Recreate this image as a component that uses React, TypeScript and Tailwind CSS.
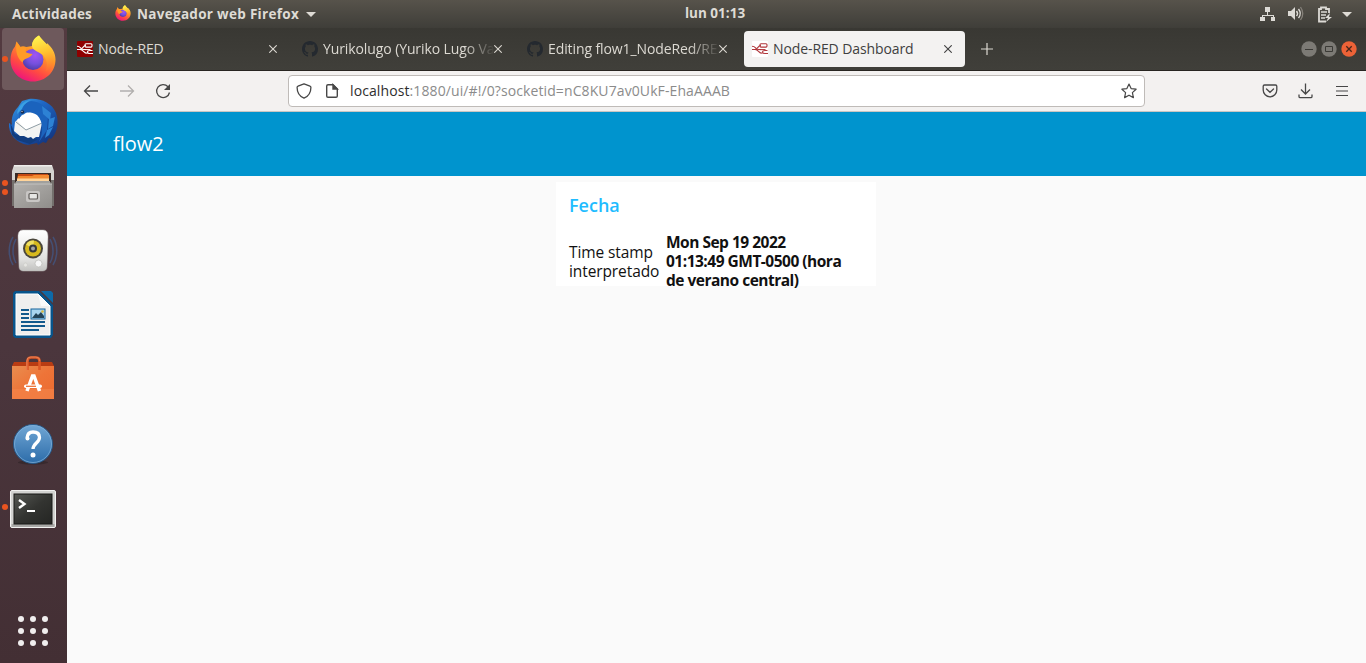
import type { ReactNode } from 'react';

const SANS = "font-['Open_Sans','Noto_Sans',sans-serif]";

function FirefoxLogo({ id, className }: { id: string; className: string }) {
  return (
    <svg viewBox="0 0 46 47" className={className}>
      <defs>
        <linearGradient id={`${id}-body`} x1="0.8" y1="0.05" x2="0.3" y2="1">
          <stop offset="0" stopColor="#ffe14a" />
          <stop offset="0.35" stopColor="#ff9a26" />
          <stop offset="0.7" stopColor="#ff4b42" />
          <stop offset="1" stopColor="#ed1180" />
        </linearGradient>
        <linearGradient id={`${id}-tail`} x1="0.4" y1="0" x2="0.6" y2="1">
          <stop offset="0" stopColor="#fff44f" />
          <stop offset="0.5" stopColor="#ffc12e" />
          <stop offset="1" stopColor="#ff7a30" stopOpacity="0.3" />
        </linearGradient>
        <radialGradient id={`${id}-globe`} cx="0.6" cy="0.3" r="0.75">
          <stop offset="0" stopColor="#a154f4" />
          <stop offset="0.55" stopColor="#7650dd" />
          <stop offset="1" stopColor="#4a3aa5" />
        </radialGradient>
      </defs>
      <path
        fill={`url(#${id}-body)`}
        d="M29 0.5c2 3 4.500 5.500 7.500 9l.8-1.200C42 12.500 45.500 18 45.500 24.500 45.500 37 35.500 46.500 23 46.500S.5 37 .5 25c0-5.500 1.500-10 4.500-13.500L6.500 6.500l4 5.500c2-.7 4-.7 6 0L22 11c.5-5 3-8.500 7-10.500z"
      />
      <circle cx="23" cy="24.500" r="10.500" fill={`url(#${id}-globe)`} />
      <path fill={`url(#${id}-tail)`} d="M29 0.500c2 4 9 8.500 12 14 3 6 2.500 13-1 18-1 2-3 3.500-4.500 4 3-8 1-14-5-18-4-2.500-8.500-4-8.500-8 0-4.500 3-8 7-10z" />
      <path fill="#ff9b26" d="M6.500 6.500l4 5.500c2-.7 4-.6 6 .2L15.500 17c2 1 4.500 1.600 7 2-1 2.500-3.500 3.500-6 4.500-1.500.6-3.500 1.500-4 4C8 24 5 18 6.500 6.500z" />
    </svg>
  );
}

function ThunderbirdIcon() {
  return (
    <svg viewBox="0 0 62 62" className="size-[62px]">
      <defs>
        <linearGradient id="tb" x1="0" y1="0" x2="0.8" y2="1">
          <stop offset="0" stopColor="#3aa5e8" />
          <stop offset="0.4" stopColor="#1f66c4" />
          <stop offset="1" stopColor="#12347e" />
        </linearGradient>
      </defs>
      <path fill="url(#tb)" d="M16 15l4-6 7-2c12-1 23 4 27 14 3 9 2 19-5 26l-2-1-3 5-3-1-5 3-1-2-9 2C14 51 6 42 7 31l3 2c-1-7 1-13 6-18z" />
      <path fill="#123d7f" d="M8 30l2 13 5 5 13 4 8-5-23-5z" />
      <path fill="#f4f4f2" d="M13 30l7-7c3-1 6-1 9-4l12 7-4 19-3 0-3 2-2-2-3 1-4-2-4 0-6-5z" />
      <path fill="#fff" d="M15 28l9 10 16-7-4-8-11-3z" />
      <path d="M14 30l10 8 16-7" fill="none" stroke="#8f9da5" strokeWidth="1" />
      <path fill="#1b63bd" d="M17 27c-1-9 4-16 12-18 9 1 16 5 17 13l-1 16-8 12c4-9 5-20-2-27-6-4-11-3-15-1z" />
      <path fill="#3aa0e4" d="M15 22c1-8 6-13 14-14-4 2-7 4-9 9z" />
      <path fill="#2d82d4" d="M40 14l9 7-1 7-7-6zM47 27l6-2-2 9-5 3zM45 38l6-3-4 8-4 3z" />
      <circle cx="20.500" cy="20" r="1.800" fill="#173052" />
      <circle cx="20" cy="19.500" r=".6" fill="#fff" />
    </svg>
  );
}

function FilesIcon() {
  return (
    <svg viewBox="0 0 62 62" className="size-[62px]">
      <defs>
        <linearGradient id="cab" x1="0" y1="0" x2="1" y2="1">
          <stop offset="0" stopColor="#b3b1ae" />
          <stop offset="1" stopColor="#8f8d8a" />
        </linearGradient>
      </defs>
      <path fill="#74706d" d="M10 18h42v32H10z" />
      <path fill="#d5d3d0" d="M12 9h38l2 6v9H10v-9z" />
      <path fill="#efeeec" d="M12 9h38v1.500H12z" />
      <path fill="#392a26" d="M13 17h36v9H13z" />
      <path fill="#c64a13" d="M16 18h30l1 7H15z" />
      <path fill="#f38a32" d="M16 20h14l2-1h15v6H15z" />
      <path fill="#ffd49a" d="M15 22.500h32V25H15z" />
      <path fill="#a1a09d" d="M14 25h34v4H14z" />
      <path fill="url(#cab)" d="M12 28h38v24H12z" />
      <path fill="#c3c1bf" d="M12 27.500h38v1H12z" />
      <rect x="24" y="35" width="14" height="11" rx="2" fill="#c8c6c4" />
      <rect x="27" y="37.500" width="8.500" height="5.500" rx="1" fill="#e6e6e4" stroke="#605d5a" strokeWidth="1.200" />
    </svg>
  );
}

function SpeakerIcon() {
  return (
    <svg viewBox="0 0 62 62" className="size-[62px]">
      <defs>
        <linearGradient id="spk" x1="0" y1="0" x2="0" y2="1">
          <stop offset="0" stopColor="#ffffff" />
          <stop offset="0.7" stopColor="#e2e2e0" />
          <stop offset="1" stopColor="#c2c2c0" />
        </linearGradient>
      </defs>
      <g fill="none" stroke="#405d91" strokeWidth="1.500" opacity=".65">
        <path d="M11 17c-5 8-5 20 0 28M14 19c-4 7-4 17 0 24" />
        <path d="M51 17c5 8 5 20 0 28M48 19c4 7 4 17 0 24" />
      </g>
      <path fill="url(#spk)" stroke="#b5b5b2" strokeWidth=".5" d="M21 10h20c4 0 5 3 5 7l-1 29c0 4-2 5-5 5H22c-3 0-5-1-5-5l-1-29c0-4 1-7 5-7z" />
      <circle cx="31" cy="28.500" r="10" fill="#4a463b" />
      <circle cx="31" cy="28.500" r="8" fill="#d7b91e" />
      <path d="M31 28.500l-7-4a8 8 0 0 1 8-4z" fill="#f0df61" />
      <circle cx="31" cy="28.500" r="4" fill="#37383a" />
      <circle cx="31" cy="28.500" r="2" fill="#a3a3a3" />
      <circle cx="36.500" cy="43.500" r="3.500" fill="#f7f7f7" stroke="#bbbbb8" strokeWidth=".7" />
      <circle cx="23.500" cy="45" r="2" fill="#e5e5e2" stroke="#c9c9c5" strokeWidth=".6" />
    </svg>
  );
}

function WriterIcon() {
  return (
    <svg viewBox="0 0 62 62" className="size-[62px]">
      <path fill="#07548b" d="M13 7h24l14 14v30l-2 3H13l-2-2V9z" />
      <path fill="#0e6aa8" d="M39 7h10l2 2v10z" />
      <path fill="#efefee" stroke="#fff" strokeWidth="1" d="M14 10h22l12 12v29H14z" />
      <path fill="#fff" d="M36 10l12 12h-9z" opacity=".7" />
      <path stroke="#11598c" strokeWidth="2" d="M19 26h8M19 30h8M19 34h8M19 38h24M19 42h24M19 46h18" />
      <rect x="29" y="25" width="14" height="10" fill="#a9d5ef" stroke="#17659b" strokeWidth="1" />
      <path fill="#244458" d="M30 34l4-5 2 2 3-3 3 4v2z" />
      <circle cx="40.500" cy="27.500" r="1.300" fill="#d9b83a" />
    </svg>
  );
}

function SoftwareIcon() {
  return (
    <svg viewBox="0 0 62 62" className="size-[62px]">
      <defs>
        <linearGradient id="bag" x1="0" y1="0" x2="1" y2="1">
          <stop offset="0" stopColor="#e98d4f" />
          <stop offset="0.5" stopColor="#ee7438" />
          <stop offset="1" stopColor="#ec6a2f" />
        </linearGradient>
      </defs>
      <path fill="#b93c13" d="M12 14h38l2 4H10z" />
      <path fill="url(#bag)" d="M10 18h42v33H10z" />
      <path fill="#f38348" opacity=".7" d="M10 41h42v10H10z" />
      <path fill="none" stroke="#dd5826" strokeWidth="2.600" d="M25.500 22V13q0-3.500 3.500-3.500h5q3.500 0 3.500 3.500v9" />
      <path fill="none" stroke="#f0a078" strokeWidth=".6" d="M24.800 22V13q0-4 4-4h5q4 0 4 4" />
      <path d="M25 43l5.500-15h1.500l5.500 15" fill="none" stroke="#fff" strokeWidth="3.500" />
      <rect x="22" y="36.500" width="18" height="3.600" rx="1.800" fill="#fff" />
      <path d="M24 38.300h10" stroke="#ee7438" strokeWidth="1.300" />
    </svg>
  );
}

function HelpIcon() {
  return (
    <svg viewBox="0 0 62 62" className="size-[62px]">
      <defs>
        <linearGradient id="help" x1="0" y1="0" x2="0" y2="1">
          <stop offset="0" stopColor="#71a7d5" />
          <stop offset="1" stopColor="#2c6ca9" />
        </linearGradient>
      </defs>
      <ellipse cx="31" cy="50.500" rx="15" ry="2" fill="#251c20" opacity=".45" />
      <circle cx="31" cy="32" r="19.500" fill="url(#help)" stroke="#285887" strokeWidth="1" />
      <circle cx="31" cy="32" r="18.500" fill="none" stroke="#83b2da" strokeWidth=".7" />
      <path d="M25 26c.5-5 4-6 6-6 4 0 6.500 2 6.500 5.500 0 5-6.500 6-6.500 11.500" fill="none" stroke="#fff" strokeWidth="3.300" />
      <circle cx="25.500" cy="26.500" r="2" fill="#fff" />
      <circle cx="31" cy="43" r="2.500" fill="#fff" />
    </svg>
  );
}

function TerminalIcon() {
  return (
    <svg viewBox="0 0 62 62" className="size-[62px]">
      <defs>
        <linearGradient id="term" x1="0" y1="0" x2="1" y2="1">
          <stop offset="0" stopColor="#555753" />
          <stop offset="0.5" stopColor="#333431" />
          <stop offset="1" stopColor="#242523" />
        </linearGradient>
      </defs>
      <rect x="8.500" y="14.500" width="45" height="37" rx="1.500" fill="#d2d2d0" stroke="#f2f2f1" />
      <rect x="9.500" y="48" width="43" height="3" fill="#a9a9a7" />
      <rect x="12" y="18" width="38" height="30" fill="url(#term)" stroke="#181917" />
      <path d="M17 24l5.500 4-5.500 4" fill="none" stroke="#fff" strokeWidth="2.400" />
      <path d="M25 35h8" stroke="#fff" strokeWidth="2" />
    </svg>
  );
}

function DockItem({ children, active, dots = 0 }: { children: ReactNode; active?: boolean; dots?: number }) {
  return (
    <div className={`relative flex size-[62px] shrink-0 items-center justify-center rounded ${active ? 'bg-[#6e595c]' : ''}`}>
      {children}
      {dots > 0 && (
        <div className="absolute left-0 top-0 flex h-full flex-col justify-center gap-[3px]">
          {Array.from({ length: dots }, (_, i) => (
            <span key={i} className="size-[6px] rounded-full bg-[#e95420]" />
          ))}
        </div>
      )}
    </div>
  );
}

function NodeRedIcon({ inverted }: { inverted?: boolean }) {
  return (
    <svg viewBox="0 0 16 16" className="size-4 shrink-0">
      <rect width="16" height="16" rx="1" fill={inverted ? '#fff' : '#8f0000'} />
      <g fill="none" stroke={inverted ? '#b0353a' : '#fff'} strokeWidth="1.100">
        <path d="M0 8.500h3c3 0 2.500-4 6-4M3 8.500c4 0 3 3.800 7.500 3.800" />
        <path d="M0 5.300c3 0 3 1.200 4.500 2.500" />
        <path d="M9 8.600h4.500" />
        <path d="M4 8.300c3 0 3 .3 5 .3" />
        <rect x="8" y="2.800" width="7" height="3.300" rx="1" />
        <path d="M15.500 9.500h-2.500q-2.500 0-2.500 1.500t2.500 1.500h3" />
      </g>
    </svg>
  );
}

function GithubIcon() {
  return (
    <svg viewBox="0 0 16 16" className="size-4 shrink-0" fill="#24292f">
      <path d="M8 0C3.580 0 0 3.580 0 8c0 3.540 2.290 6.530 5.470 7.590.4.070.55-.17.55-.38 0-.19-.01-.82-.01-1.490-2.010.37-2.530-.49-2.690-.94-.09-.23-.48-.94-.82-1.130-.28-.15-.68-.52-.01-.53.63-.01 1.080.58 1.230.82.72 1.210 1.870.87 2.330.66.07-.52.28-.87.51-1.070-1.780-.2-3.640-.89-3.640-3.950 0-.87.31-1.590.82-2.150-.08-.2-.36-1.020.08-2.120 0 0 .67-.21 2.200.82.64-.18 1.320-.27 2-.27s1.360.09 2 .27c1.530-1.040 2.200-.82 2.200-.82.44 1.100.16 1.920.08 2.120.51.56.82 1.270.82 2.150 0 3.070-1.870 3.750-3.650 3.950.29.25.54.73.54 1.480 0 1.070-.01 1.930-.01 2.200 0 .21.15.46.55.38A8.010 8.010 0 0 0 16 8c0-4.420-3.580-8-8-8z" />
    </svg>
  );
}

function Tab({ icon, title, textClass, active, faded }: { icon: ReactNode; title: string; textClass: string; active?: boolean; faded?: boolean }) {
  return (
    <div className={`flex h-9 w-[221px] shrink-0 items-center rounded pl-2 ${active ? 'bg-[#f3f2f1] text-[#404040]' : 'text-[#dcd9d2]'}`}>
      {icon}
      <span
        className={`ml-[5px] h-5 w-[172px] shrink-0 overflow-hidden whitespace-nowrap text-sm leading-5 ${textClass} ${
          faded ? '[mask-image:linear-gradient(to_right,black_82%,transparent)]' : ''
        }`}
      >
        {title}
      </span>
      <svg viewBox="0 0 8 8" className="-ml-px mt-px size-2 shrink-0" stroke="currentColor" strokeWidth="1.100">
        <path d="M.3.3l7.400 7.400M7.700.3L.3 7.700" />
      </svg>
    </div>
  );
}

function TopBar() {
  return (
    <header className="flex h-7 shrink-0 items-center bg-linear-to-b from-[#57534b] to-[#3f3e39] text-[13.500px] font-bold leading-5 text-[#dedbd5]">
      <span className="ml-3 w-[103px] tracking-[0.18px]">Actividades</span>
      <FirefoxLogo id="ff-small" className="-mt-0.5 size-4" />
      <span className="ml-[6px] w-[169px] whitespace-nowrap tracking-[0.3px]">Navegador web Firefox</span>
      <svg viewBox="0 0 10 5" className="h-[5px] w-[10px]"><path fill="#dedbd5" d="M0 0h10L5 5z" /></svg>
      <span className="ml-[369px] -mt-0.5 whitespace-nowrap tracking-[0px]">lun 01:13</span>
      <div className="ml-auto flex items-center pr-[14px]">
        <svg viewBox="0 0 16 16" className="size-4" fill="#dcdad5">
          <path d="M5 1h5v5H5zM0 11h5v4H0zM11 11h4v4h-4zM7 6h1v3h6v2h-1v-1H3v1H2V9h5z" />
        </svg>
        <svg viewBox="0 0 16 16" className="ml-3 size-4" fill="#dcdad5">
          <path d="M0 5h3l4-4v13l-4-4H0z" />
          <path d="M8.500 5q2 2.500 0 5" fill="none" stroke="#dcdad5" strokeWidth="1.500" />
          <path d="M10.500 3q3.500 4.500 0 9" fill="none" stroke="#dcdad5" strokeWidth="1.400" />
          <path d="M12.500 1q4.500 6.500 0 13" fill="none" stroke="#85817a" strokeWidth="1.300" />
        </svg>
        <svg viewBox="0 0 16 17" className="ml-[13px] h-[17px] w-4" fill="none" stroke="#dcdad5">
          <path strokeWidth="1.800" d="M9 15.500H2V3h2V1.500h5V3h3v4" />
          <path strokeWidth="1.300" d="M4 6h6M4 9h5M4 12h4" />
          <path fill="#dcdad5" stroke="none" d="M13 7l-5 5h3l-2 4 6-5h-3z" />
        </svg>
        <svg viewBox="0 0 10 5" className="ml-[9px] h-[5px] w-[10px]"><path fill="#dedbd5" d="M0 0h10L5 5z" /></svg>
      </div>
    </header>
  );
}

function Dock() {
  return (
    <aside className="flex w-[67px] shrink-0 flex-col gap-0.5 bg-linear-to-b from-[#533a40] via-[#4b363d] to-[#432f34] pl-0.5">
      <DockItem active dots={1}><FirefoxLogo id="ff" className="mb-px h-[47px] w-[46px]" /></DockItem>
      <DockItem><ThunderbirdIcon /></DockItem>
      <DockItem dots={2}><FilesIcon /></DockItem>
      <DockItem><SpeakerIcon /></DockItem>
      <DockItem><WriterIcon /></DockItem>
      <DockItem><SoftwareIcon /></DockItem>
      <DockItem><HelpIcon /></DockItem>
      <DockItem dots={1}><TerminalIcon /></DockItem>
      <div className="mb-[17px] ml-4 mt-auto grid w-[30px] grid-cols-3 gap-[6px]">
        {Array.from({ length: 9 }, (_, i) => (
          <span key={i} className="size-[6px] rounded-full bg-[#f0eeee]" />
        ))}
      </div>
    </aside>
  );
}

function TabStrip() {
  return (
    <div className="flex h-[43px] shrink-0 items-center gap-1 border-b border-[#282521] bg-linear-to-b from-[#393833] to-[#403f3a] pb-px pl-0.5">
      <Tab icon={<NodeRedIcon />} title="Node-RED" textClass="tracking-[-0.1px]" />
      <Tab icon={<GithubIcon />} title="Yurikolugo (Yuriko Lugo Vargas)" textClass="tracking-[-0.1px]" faded />
      <Tab icon={<GithubIcon />} title="Editing flow1_NodeRed/README.md" textClass="tracking-[-0.1px]" faded />
      <Tab icon={<NodeRedIcon inverted />} title="Node-RED Dashboard" textClass="tracking-[-0.1px]" active />
      <svg viewBox="0 0 12 12" className="ml-3 mt-px size-3" stroke="#dcd9d2" strokeWidth="1.200"><path d="M6 0v12M0 6h12" /></svg>
      <div className="ml-auto flex gap-1 pr-[9px]">
        <svg viewBox="0 0 16 16" className="size-4">
          <circle cx="8" cy="8" r="7.700" fill="#7c7a75" /><path d="M4 8.500h8" stroke="#3b3a36" />
        </svg>
        <svg viewBox="0 0 16 16" className="size-4">
          <circle cx="8" cy="8" r="7.700" fill="#7c7a75" /><path d="M4.500 5.500h7v5h-7z" fill="none" stroke="#3b3a36" />
        </svg>
        <svg viewBox="0 0 16 16" className="size-4">
          <circle cx="8" cy="8" r="7.700" fill="#ec6237" /><path d="M5.300 5.300l5.400 5.400M10.700 5.300l-5.400 5.400" stroke="#45261b" strokeWidth="1.300" />
        </svg>
      </div>
    </div>
  );
}

function Toolbar() {
  return (
    <div className="flex h-[41px] shrink-0 items-center border-b border-[#c9c6c3] bg-[#f3f1f0]">
      <svg viewBox="0 0 16 16" className="ml-4 size-4" fill="none" stroke="#474747" strokeWidth="1.300"><path d="M15 8H1.500M7 2.500L1.500 8 7 13.500" /></svg>
      <svg viewBox="0 0 16 16" className="ml-5 size-4" fill="none" stroke="#b1afae" strokeWidth="1.300"><path d="M1 8h13.500M9 2.500L14.500 8 9 13.500" /></svg>
      <svg viewBox="0 0 16 16" className="ml-5 size-4" fill="none" stroke="#474747" strokeWidth="1.300">
        <path d="M14.500 9.500A6.500 6.500 0 1 1 13 3.700" /><path fill="#474747" stroke="none" d="M15 1v6H9z" />
      </svg>
      <div className="ml-[117px] flex h-8 w-[857px] items-center rounded border border-[#bfbbb8] bg-white">
        <svg viewBox="0 0 16 16" className="ml-[7px] size-4" fill="none" stroke="#474747" strokeWidth="1.300">
          <path strokeLinejoin="round" d="M8 .8l6 2.400q.9.300.9 1.300c0 5-2 8.600-6.900 10.700C3.100 13.100 1.100 9.500 1.100 4.500q0-1 .9-1.300z" />
        </svg>
        <svg viewBox="0 0 16 16" className="ml-3 size-4" fill="none" stroke="#474747" strokeWidth="1.400">
          <path strokeLinejoin="round" d="M9 1.700H4q-1.300 0-1.300 1.300v10q0 1.300 1.300 1.300h8q1.300 0 1.300-1.300V6z" /><path fill="#474747" d="M9 1.700V6h4.300z" />
        </svg>
        <span className="ml-[10px] whitespace-nowrap text-sm tracking-[0.1px] text-[#8b8b8b]">
          <span className="text-[#2e2e2e]">localhost</span>:1880/ui/#!/0?socketid=nC8KU7av0UkF-EhaAAAB
        </span>
        <svg viewBox="0 0 16 16" className="ml-auto mr-[7px] size-4" fill="none" stroke="#474747" strokeWidth="1.200" strokeLinejoin="round">
          <path d="M8 1l2.100 4.600 5 .6-3.700 3.400 1 5L8 12.200l-4.400 2.400 1-5L.9 6.200l5-.6z" />
        </svg>
      </div>
      <svg viewBox="0 0 16 16" className="ml-[117px] size-4" fill="none" stroke="#474747" strokeWidth="1.300">
        <path d="M2.500 2h11q1.300 0 1.300 1.300V7a6.800 6.800 0 0 1-13.600 0V3.300Q1.200 2 2.500 2z" /><path strokeLinecap="round" d="M4.500 6L8 9.300 11.500 6" />
      </svg>
      <svg viewBox="0 0 16 16" className="ml-[20px] size-4" fill="none" stroke="#474747" strokeWidth="1.300">
        <path d="M7.500.5v10M3 6.500l4.500 4.500L12 6.500M1 11.500v2q0 1.200 1.200 1.200h10.600q1.200 0 1.200-1.200v-2" />
      </svg>
      <svg viewBox="0 0 12 12" className="ml-[22px] size-3" stroke="#474747" strokeWidth="1.200"><path d="M0 1.500h12M0 6h12M0 10.500h12" /></svg>
    </div>
  );
}

function Dashboard() {
  return (
    <>
      <div className="flex h-16 shrink-0 items-center bg-[#0094ce] pl-[46px] text-[20px] leading-7 tracking-[0px] text-white">flow2</div>
      <main className="flex flex-1 justify-center bg-[#fafafa] pr-px pt-[6px]">
        <section className="h-[104px] w-[320px] bg-white px-[13px] pt-[9px]">
          <h2 className="text-[18px] font-semibold leading-7 text-[#1fbcff]">Fecha</h2>
          <div className="mt-[14px] flex items-center whitespace-nowrap text-[#111]">
            <p className="w-[97px] shrink-0 text-[15.500px] leading-[19px]">
              <span className="block tracking-[-0.1px]">Time stamp</span>
              <span className="block tracking-[-0.1px]">interpretado</span>
            </p>
            <p className="text-[15.500px] font-bold leading-[19px]">
              <span className="block tracking-[-0.5px]">Mon Sep 19 2022</span>
              <span className="block tracking-[-0.5px]">01:13:49 GMT-0500 (hora</span>
              <span className="block tracking-[-0.5px]">de verano central)</span>
            </p>
          </div>
        </section>
      </main>
    </>
  );
}

export default function App() {
  return (
    <div className={`flex h-[663px] w-[1366px] flex-col overflow-hidden ${SANS}`}>
      <TopBar />
      <div className="flex min-h-0 flex-1">
        <Dock />
        <div className="flex min-w-0 flex-1 flex-col">
          <TabStrip />
          <Toolbar />
          <Dashboard />
        </div>
      </div>
    </div>
  );
}
